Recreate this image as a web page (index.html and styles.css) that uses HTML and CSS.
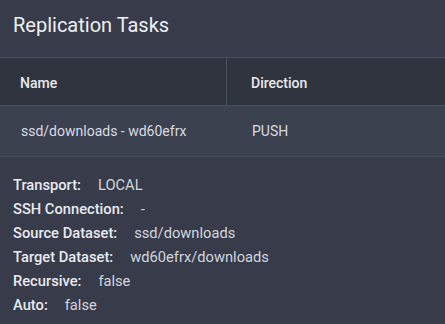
FILE: index.html
```html
<!DOCTYPE html>
<html>
<head>
<meta charset="utf-8">
<link rel="stylesheet" href="styles.css">
</head>
<body>
<div class="card">
  <div class="title">Replication Tasks</div>
  <div class="table">
    <div class="thead">
      <div class="th name-col">Name</div>
      <div class="th dir-col">Direction</div>
    </div>
    <div class="trow">
      <div class="td name-col">ssd/downloads - wd60efrx</div>
      <div class="td dir-col">PUSH</div>
    </div>
  </div>
  <div class="details">
    <div class="line"><span class="label">Transport:</span><span class="value">LOCAL</span></div>
    <div class="line"><span class="label">SSH Connection:</span><span class="value">-</span></div>
    <div class="line"><span class="label">Source Dataset:</span><span class="value">ssd/downloads</span></div>
    <div class="line"><span class="label">Target Dataset:</span><span class="value">wd60efrx/downloads</span></div>
    <div class="line"><span class="label">Recursive:</span><span class="value">false</span></div>
    <div class="line"><span class="label">Auto:</span><span class="value">false</span></div>
  </div>
</div>
</body>
</html>
```

FILE: styles.css
```css
html, body {
  margin: 0;
  padding: 0;
  background: #373b4a;
  font-family: Roboto, "Liberation Sans", sans-serif;
}
.card {
  width: 445px;
  height: 324px;
  background: #373b4a;
  overflow: hidden;
}
.title {
  height: 58px;
  box-sizing: border-box;
  padding: 12px 13px 0;
  font-size: 20px;
  line-height: 26px;
  color: #eef0f4;
  border-bottom: 1px solid #4a4f5e;
}
.thead {
  display: flex;
  height: 48px;
  box-sizing: border-box;
  padding-top: 3px;
  background: #30343f;
  border-bottom: 1px solid #4a4f5e;
}
.th {
  display: flex;
  align-items: center;
  font-size: 14px;
  font-weight: 500;
  color: #e8eaee;
}
.name-col {
  width: 227px;
  box-sizing: border-box;
  padding-left: 20px;
}
.thead .name-col {
  border-right: 1px solid #4a4f5e;
  margin-top: -3px;
  padding-top: 3px;
}
.dir-col {
  padding-left: 24px;
}
.trow {
  display: flex;
  height: 51px;
  box-sizing: border-box;
  background: #3c4150;
  border-bottom: 1px solid #4a4f5e;
}
.td {
  display: flex;
  align-items: center;
  font-size: 14px;
  color: #d8dbe2;
}
.trow .name-col { padding-left: 21px; }
.trow .dir-col { padding-left: 25px; }
.details {
  padding: 16px 13px 0;
}
.line {
  height: 24px;
  line-height: 24px;
  font-size: 14.7px;
}
.label {
  font-weight: 500;
  color: #e8eaee;
  margin-right: 17px;
}
.value {
  color: #d3d6dd;
}
```
